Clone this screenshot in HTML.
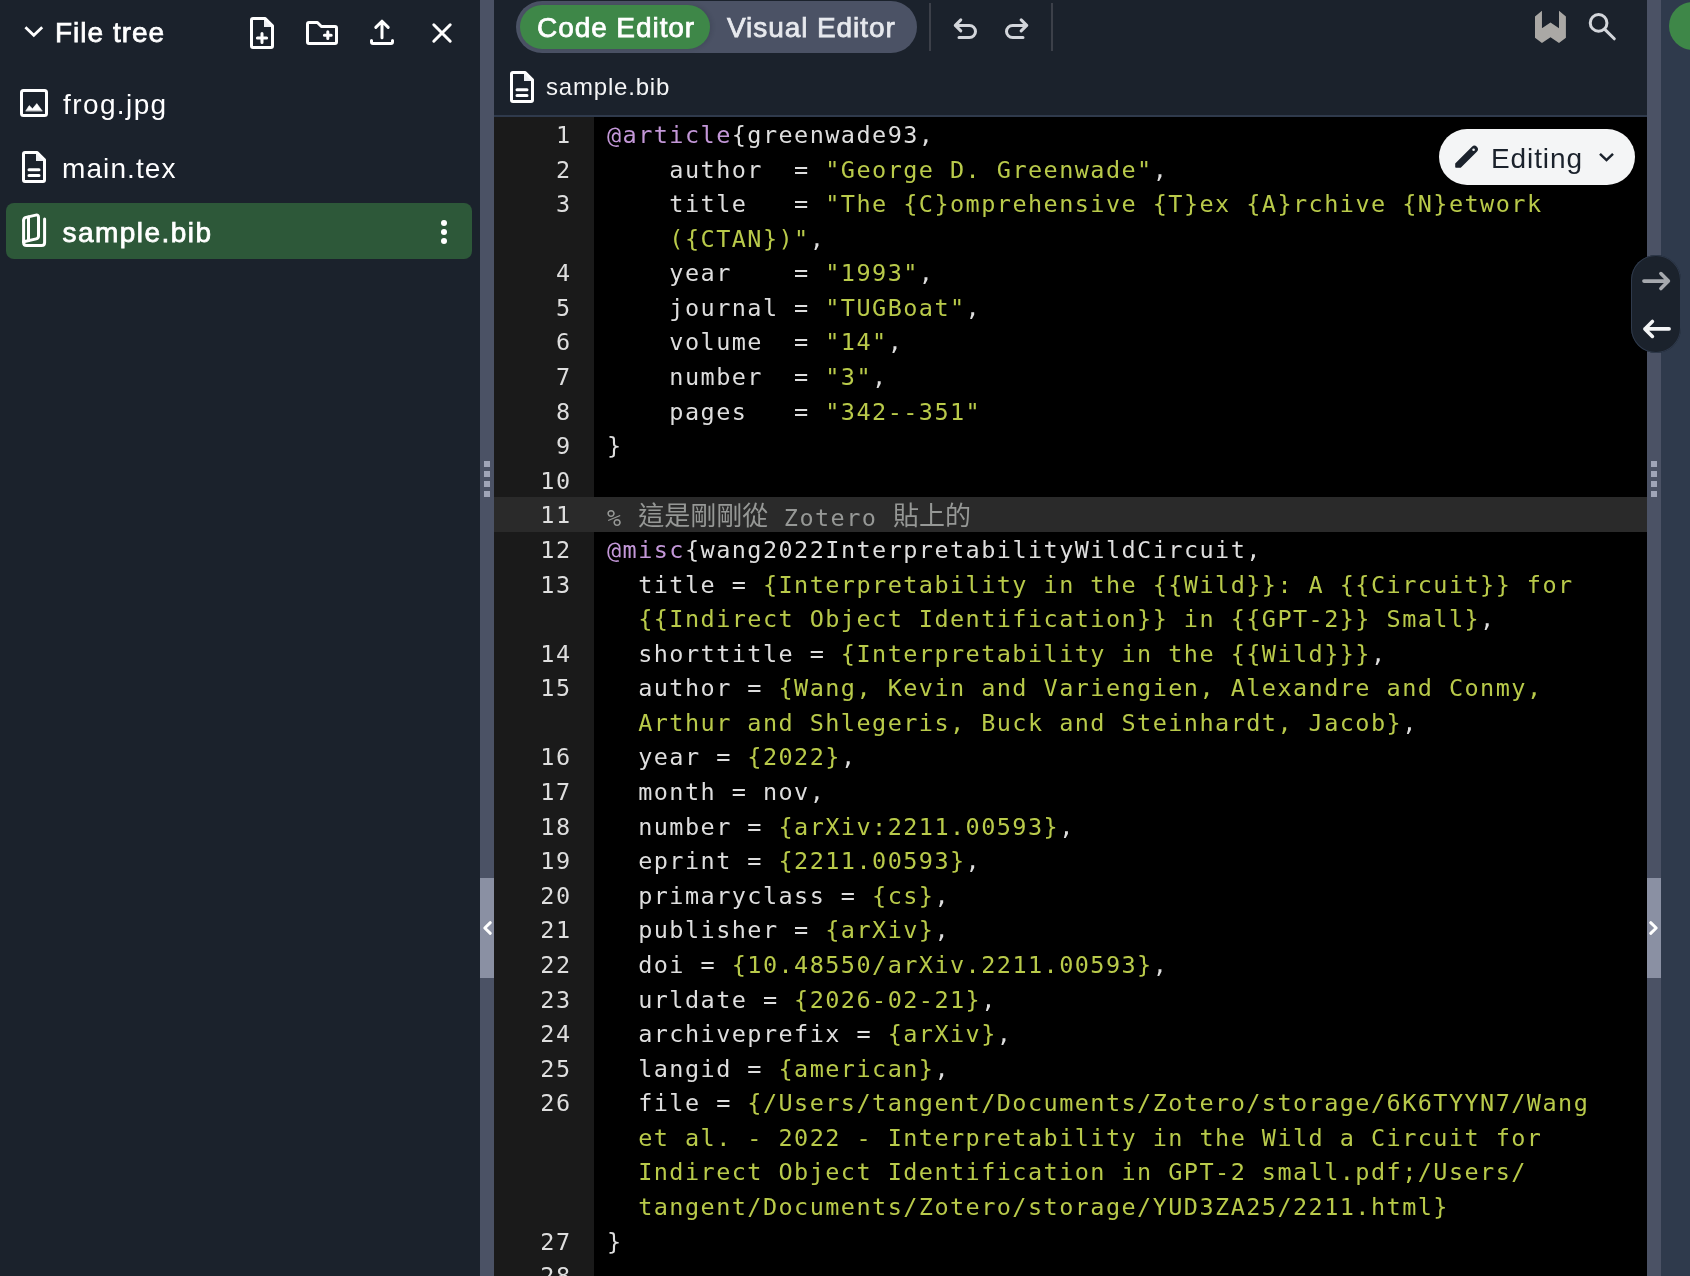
<!DOCTYPE html>
<html lang="en">
<head>
<meta charset="utf-8">
<title>sample.bib - Overleaf</title>
<style>
*{box-sizing:border-box;margin:0;padding:0}
html,body{width:1690px;height:1276px;overflow:hidden;background:#1b222c}
body{position:relative;font-family:"DejaVu Sans","Liberation Sans","Noto Sans CJK TC",sans-serif;color:#fff}
#app{position:absolute;left:0;top:0;width:1690px;height:1276px;overflow:hidden;background:#1b222c;will-change:transform}
.abs{position:absolute}
#sidebar{left:0;top:0;width:480px;height:1276px;background:#1b222c}
#divL{left:480px;top:0;width:14px;height:1276px;background:#4b5265}
#divR{left:1647px;top:0;width:14px;height:1276px;background:#4b5265}
#pdf{left:1661px;top:0;width:29px;height:1276px;background:#2f3a4c}
#toolbar{left:494px;top:0;width:1153px;height:115px;background:#1b222c}
#tbborder{left:494px;top:115px;width:1153px;height:2px;background:#2f3a4c}
#gutter{left:494px;top:117px;width:100px;height:1159px;background:#1a1a1a;overflow:hidden}
#code{left:594px;top:117px;width:1053px;height:1159px;background:#000;overflow:hidden}
.ln,.gn{position:absolute;left:0;right:0;height:34.58px;line-height:34.58px;padding-top:1px;white-space:pre;font-family:"DejaVu Sans Mono","Liberation Mono","Noto Sans CJK TC",monospace;font-size:23.5px;letter-spacing:1.443px;color:#dedede}
.cjk{font-family:"Noto Sans CJK TC","Noto Sans CJK SC",sans-serif;font-size:26px;letter-spacing:0;position:relative;top:-1.5px}
.ln{}
.ln.act{padding-left:13px;background:#2a2a2a}
.gn{text-align:right;padding-right:22.5px;color:#dedede}
.gn.act{background:#2a2a2a}
.k{color:#c397d8}.s{color:#b9ca4a}.c{color:#969896}.w{color:#dedede}
svg{display:block}
.ui{font-family:"DejaVu Sans","Liberation Sans",sans-serif}

.b28{font-family:"Liberation Sans",sans-serif;font-weight:normal;-webkit-text-stroke:.75px currentColor;font-size:28px;line-height:40px;white-space:nowrap;color:#fff;letter-spacing:.8px}
.r28{font-family:"Liberation Sans",sans-serif;font-size:28px;line-height:40px;white-space:nowrap;color:#fff;letter-spacing:.9px}
.r24{font-family:"Liberation Sans",sans-serif;font-size:24px;line-height:34px;white-space:nowrap;color:#f4f5f6;letter-spacing:.8px}
.ic{fill:none;stroke:#fff;stroke-width:1.5;stroke-linecap:round;stroke-linejoin:round}
.sq{left:4px;width:6px;height:6px;background:#a0a5b8}
.tog{left:0;width:14px;height:100px;background:#8a90a3}
#editing{left:1439px;top:129px;width:196px;height:56px;border-radius:28px;background:#f4f5f6}
#switch{left:1631px;top:255px;width:50px;height:98px;border-radius:25px;background:#1b222c;box-shadow:0 0 0 1px #2f3a4c inset}
</style>
</head>
<body>
<div id="app">
<div id="sidebar" class="abs">
  <svg class="abs" style="left:14px;top:11px" width="40" height="40" viewBox="0 0 40 40"><path d="M11.4 16.2 19.8 24.2 28.2 16.2" fill="none" stroke="#fff" stroke-width="2.8"/></svg>
  <div class="abs b28" id="ft" style="left:55px;top:13px;letter-spacing:1px">File tree</div>
  <!-- new file -->
  <svg class="abs ic" style="left:242px;top:13px" width="40" height="40" viewBox="0 0 20 20"><path d="M11 2.75V7h4.25V6.4L11.6 2.75Z" fill="#eef0f3" stroke="none"/><path d="M5.5 2.75H11.6L15.25 6.4V16.5a.75.75 0 0 1-.75.75h-9a.75.75 0 0 1-.75-.75v-13a.75.75 0 0 1 .75-.75Z"/><path d="M10 10.2v4.6M7.7 12.5h4.6"/></svg>
  <!-- new folder -->
  <svg class="abs ic" style="left:302px;top:13px" width="40" height="40" viewBox="0 0 20 20"><path d="M3.5 4.75H7.7L9.7 6.75H16.5a.75.75 0 0 1 .75.75v7a.75.75 0 0 1-.75.75h-13a.75.75 0 0 1-.75-.75v-9a.75.75 0 0 1 .75-.75Z"/><path d="M12.9 9.4v3.4M11.2 11.1h3.4"/></svg>
  <!-- upload -->
  <svg class="abs ic" style="left:362px;top:13px" width="40" height="40" viewBox="0 0 20 20"><path d="M10 12.4V4.3M6.9 7.2 10 4.1 13.1 7.2M4.75 13.8v.7a.75.75 0 0 0 .75.75h9a.75.75 0 0 0 .75-.75v-.7"/></svg>
  <!-- close -->
  <svg class="abs ic" style="left:422px;top:13px" width="40" height="40" viewBox="0 0 20 20"><path d="M5.9 5.9 14.1 14.1M14.1 5.9 5.9 14.1"/></svg>

  <div class="abs" id="sel" style="left:6px;top:203px;width:466px;height:56px;border-radius:8px;background:#2d5839"></div>
  <!-- image icon -->
  <svg class="abs ic" style="left:14px;top:83px" width="40" height="40" viewBox="0 0 20 20"><rect x="3.75" y="3.75" width="12.5" height="12.5" rx="1"/><path d="M5.95 13.9 7.6 11.3 9.25 12.9 11.4 10.3 14.05 13.9Z" fill="#fff" stroke-width=".3"/></svg>
  <div class="abs r28" style="left:63px;top:85px;letter-spacing:1.4px">frog.jpg</div>
  <!-- doc icon -->
  <svg class="abs ic" style="left:14px;top:147px" width="40" height="40" viewBox="0 0 20 20"><path d="M11 2.75V7h4.25V6.4L11.6 2.75Z" fill="#eef0f3" stroke="none"/><path d="M5.5 2.75H11.6L15.25 6.4V16.5a.75.75 0 0 1-.75.75h-9a.75.75 0 0 1-.75-.75v-13a.75.75 0 0 1 .75-.75Z"/><path d="M7.5 11.4h5M7.5 14.25h5"/></svg>
  <div class="abs r28" style="left:62px;top:149px;letter-spacing:1.1px">main.tex</div>
  <!-- book icon -->
  <svg class="abs" style="left:14px;top:211px" width="40" height="40" viewBox="0 0 40 40" fill="none" stroke="#fff" stroke-width="3" stroke-linecap="round" stroke-linejoin="round"><path d="M9.6 9.6Q9.6 7 12 6.4L21.8 4.1Q24.5 3.5 24.5 6.3V25Q24.5 27.3 22.2 27.85L9.6 30.7"/><path d="M9.6 9.6V31.6Q9.6 34.6 12.6 34.6H27.6Q30.6 34.6 30.6 31.6V8.1"/><path d="M14.5 6V29.4"/></svg>
  <div class="abs b28" style="left:62.5px;top:213px;letter-spacing:1.45px">sample.bib</div>
  <svg class="abs" style="left:424px;top:212px" width="40" height="40" viewBox="0 0 40 40" fill="#fff"><circle cx="20" cy="11" r="3"/><circle cx="20" cy="20" r="3"/><circle cx="20" cy="29" r="3"/></svg>
</div>
<div id="divL" class="abs">
  <div class="abs sq" style="top:461px"></div><div class="abs sq" style="top:471px"></div><div class="abs sq" style="top:481px"></div><div class="abs sq" style="top:491px"></div>
  <div class="abs tog" style="top:878px"><svg width="14" height="100" viewBox="0 0 14 100"><path d="M10.3 44.7 4.8 50 10.3 55.3" fill="none" stroke="#fff" stroke-width="3" stroke-linecap="round" stroke-linejoin="round"/></svg></div>
</div>
<div id="toolbar" class="abs">
  <div class="abs" id="pill" style="left:22px;top:1px;width:401px;height:52px;border-radius:26px;background:#4b5265"></div>
  <div class="abs" id="pillon" style="left:26px;top:5px;width:190px;height:44px;border-radius:22px;background:#3e8748;box-shadow:2px 0 4px rgba(27,34,44,.16)"></div>
  <div class="abs b28" style="left:43px;top:8px;letter-spacing:.93px">Code Editor</div>
  <div class="abs b28" style="left:233px;top:8px;color:#e7e9ee;letter-spacing:.92px">Visual Editor</div>
  <div class="abs" style="left:435px;top:3px;width:2px;height:48px;background:#3c4049"></div>
  <div class="abs" style="left:557px;top:3px;width:2px;height:48px;background:#3c4049"></div>
  <!-- undo -->
  <svg class="abs" style="left:451px;top:7px" width="40" height="40" viewBox="0 0 40 40" fill="none" stroke="#d3d6db" stroke-width="3" stroke-linecap="round" stroke-linejoin="round"><path d="M10.3 18.4H24.4A6.1 6.1 0 0 1 24.4 30.6H14M15.8 12.9 10.3 18.4 15.8 23.9"/></svg>
  <!-- redo -->
  <svg class="abs" style="left:503px;top:7px" width="40" height="40" viewBox="0 0 40 40" fill="none" stroke="#d3d6db" stroke-width="3" stroke-linecap="round" stroke-linejoin="round"><path d="M29.7 18.4H15.6A6.1 6.1 0 0 0 15.6 30.6H26M24.2 12.9 29.7 18.4 24.2 23.9"/></svg>
  <!-- writefull -->
  <svg class="abs" style="left:1036px;top:6px" width="40" height="40" viewBox="0 0 40 40"><path d="M11.95 4.65V22.2L20.5 16.4 29 22.2V4.65L35.9 10.5V31.8L29 37.1 20.5 31.3 11.95 37.1 5 31.8V10.5Z" fill="#aaa8a5"/></svg>
  <!-- search -->
  <svg class="abs" style="left:1084px;top:7px" width="40" height="40" viewBox="0 0 40 40" fill="none" stroke="#d3d6db" stroke-width="3" stroke-linecap="round"><circle cx="20.6" cy="15.9" r="8.35"/><path d="M26.8 22.4 36.3 31.8"/></svg>
  <!-- breadcrumb -->
  <svg class="abs ic" style="left:8px;top:67px" width="40" height="40" viewBox="0 0 20 20"><path d="M11 2.75V7h4.25V6.4L11.6 2.75Z" fill="#eef0f3" stroke="none"/><path d="M5.5 2.75H11.6L15.25 6.4V16.5a.75.75 0 0 1-.75.75h-9a.75.75 0 0 1-.75-.75v-13a.75.75 0 0 1 .75-.75Z"/><path d="M7.5 11.4h5M7.5 14.25h5"/></svg>
  <div class="abs r24" style="left:52px;top:70px">sample.bib</div>
</div>
<div id="tbborder" class="abs"></div>
<div id="gutter" class="abs">
<div class="gn" style="top:0.00px">1</div>
<div class="gn" style="top:34.58px">2</div>
<div class="gn" style="top:69.16px">3</div>
<div class="gn" style="top:138.32px">4</div>
<div class="gn" style="top:172.90px">5</div>
<div class="gn" style="top:207.48px">6</div>
<div class="gn" style="top:242.06px">7</div>
<div class="gn" style="top:276.64px">8</div>
<div class="gn" style="top:311.22px">9</div>
<div class="gn" style="top:345.80px">10</div>
<div class="gn act" style="top:380.38px">11</div>
<div class="gn" style="top:414.96px">12</div>
<div class="gn" style="top:449.54px">13</div>
<div class="gn" style="top:518.70px">14</div>
<div class="gn" style="top:553.28px">15</div>
<div class="gn" style="top:622.44px">16</div>
<div class="gn" style="top:657.02px">17</div>
<div class="gn" style="top:691.60px">18</div>
<div class="gn" style="top:726.18px">19</div>
<div class="gn" style="top:760.76px">20</div>
<div class="gn" style="top:795.34px">21</div>
<div class="gn" style="top:829.92px">22</div>
<div class="gn" style="top:864.50px">23</div>
<div class="gn" style="top:899.08px">24</div>
<div class="gn" style="top:933.66px">25</div>
<div class="gn" style="top:968.24px">26</div>
<div class="gn" style="top:1106.56px">27</div>
<div class="gn" style="top:1141.14px">28</div>
</div>
<div id="code" class="abs">
<div class="ln" style="top:0.00px;left:13.00px"><span class="k">@article</span><span class="w">{greenwade93,</span></div>
<div class="ln" style="top:34.58px;left:75.36px"><span class="w">author  = </span><span class="s">"George D. Greenwade"</span><span class="w">,</span></div>
<div class="ln" style="top:69.16px;left:75.36px"><span class="w">title   = </span><span class="s">"The {C}omprehensive {T}ex {A}rchive {N}etwork</span></div>
<div class="ln" style="top:103.74px;left:75.36px"><span class="s">({CTAN})"</span><span class="w">,</span></div>
<div class="ln" style="top:138.32px;left:75.36px"><span class="w">year    = </span><span class="s">"1993"</span><span class="w">,</span></div>
<div class="ln" style="top:172.90px;left:75.36px"><span class="w">journal = </span><span class="s">"TUGBoat"</span><span class="w">,</span></div>
<div class="ln" style="top:207.48px;left:75.36px"><span class="w">volume  = </span><span class="s">"14"</span><span class="w">,</span></div>
<div class="ln" style="top:242.06px;left:75.36px"><span class="w">number  = </span><span class="s">"3"</span><span class="w">,</span></div>
<div class="ln" style="top:276.64px;left:75.36px"><span class="w">pages   = </span><span class="s">"342--351"</span></div>
<div class="ln" style="top:311.22px;left:13.00px"><span class="w">}</span></div>
<div class="ln" style="top:345.80px;left:13.00px"></div>
<div class="ln act" style="top:380.38px;left:0.00px"><span class="c">% <span class="cjk">這是剛剛從</span> Zotero <span class="cjk">貼上的</span></span></div>
<div class="ln" style="top:414.96px;left:13.00px"><span class="k">@misc</span><span class="w">{wang2022InterpretabilityWildCircuit,</span></div>
<div class="ln" style="top:449.54px;left:44.18px"><span class="w">title = </span><span class="s">{Interpretability in the {{Wild}}: A {{Circuit}} for</span></div>
<div class="ln" style="top:484.12px;left:44.18px"><span class="s">{{Indirect Object Identification}} in {{GPT-2}} Small}</span><span class="w">,</span></div>
<div class="ln" style="top:518.70px;left:44.18px"><span class="w">shorttitle = </span><span class="s">{Interpretability in the {{Wild}}}</span><span class="w">,</span></div>
<div class="ln" style="top:553.28px;left:44.18px"><span class="w">author = </span><span class="s">{Wang, Kevin and Variengien, Alexandre and Conmy,</span></div>
<div class="ln" style="top:587.86px;left:44.18px"><span class="s">Arthur and Shlegeris, Buck and Steinhardt, Jacob}</span><span class="w">,</span></div>
<div class="ln" style="top:622.44px;left:44.18px"><span class="w">year = </span><span class="s">{2022}</span><span class="w">,</span></div>
<div class="ln" style="top:657.02px;left:44.18px"><span class="w">month = nov,</span></div>
<div class="ln" style="top:691.60px;left:44.18px"><span class="w">number = </span><span class="s">{arXiv:2211.00593}</span><span class="w">,</span></div>
<div class="ln" style="top:726.18px;left:44.18px"><span class="w">eprint = </span><span class="s">{2211.00593}</span><span class="w">,</span></div>
<div class="ln" style="top:760.76px;left:44.18px"><span class="w">primaryclass = </span><span class="s">{cs}</span><span class="w">,</span></div>
<div class="ln" style="top:795.34px;left:44.18px"><span class="w">publisher = </span><span class="s">{arXiv}</span><span class="w">,</span></div>
<div class="ln" style="top:829.92px;left:44.18px"><span class="w">doi = </span><span class="s">{10.48550/arXiv.2211.00593}</span><span class="w">,</span></div>
<div class="ln" style="top:864.50px;left:44.18px"><span class="w">urldate = </span><span class="s">{2026-02-21}</span><span class="w">,</span></div>
<div class="ln" style="top:899.08px;left:44.18px"><span class="w">archiveprefix = </span><span class="s">{arXiv}</span><span class="w">,</span></div>
<div class="ln" style="top:933.66px;left:44.18px"><span class="w">langid = </span><span class="s">{american}</span><span class="w">,</span></div>
<div class="ln" style="top:968.24px;left:44.18px"><span class="w">file = </span><span class="s">{/Users/tangent/Documents/Zotero/storage/6K6TYYN7/Wang</span></div>
<div class="ln" style="top:1002.82px;left:44.18px"><span class="s">et al. - 2022 - Interpretability in the Wild a Circuit for</span></div>
<div class="ln" style="top:1037.40px;left:44.18px"><span class="s">Indirect Object Identification in GPT-2 small.pdf;/Users/</span></div>
<div class="ln" style="top:1071.98px;left:44.18px"><span class="s">tangent/Documents/Zotero/storage/YUD3ZA25/2211.html}</span></div>
<div class="ln" style="top:1106.56px;left:13.00px"><span class="w">}</span></div>
<div class="ln" style="top:1141.14px;left:13.00px"></div>
</div>
<div id="divR" class="abs">
  <div class="abs sq" style="top:461px"></div><div class="abs sq" style="top:471px"></div><div class="abs sq" style="top:481px"></div><div class="abs sq" style="top:491px"></div>
  <div class="abs tog" style="top:878px"><svg width="14" height="100" viewBox="0 0 14 100"><path d="M3.7 44.7 9.2 50 3.7 55.3" fill="none" stroke="#fff" stroke-width="3" stroke-linecap="round" stroke-linejoin="round"/></svg></div>
</div>
<div id="pdf" class="abs">
  <div class="abs" style="left:8px;top:2px;width:120px;height:48px;border-radius:24px;background:#3e8748"></div>
</div>
<div id="editing" class="abs">
  <svg class="abs" style="left:12px;top:12px" width="32" height="32" viewBox="0 0 32 32"><path d="M4.2 22.52 20.96 5.76A3.45 3.45 0 0 1 25.84 10.64L9.73 26.75H5Q4.2 26.75 4.2 25.95Z" fill="#1b222c"/><circle cx="22.6" cy="8.8" r="1.3" fill="#f4f5f6"/></svg>
  <div class="abs r28" style="left:52px;top:10px;color:#1b222c">Editing</div>
  <svg class="abs" style="left:148px;top:8px" width="40" height="40" viewBox="0 0 40 40"><path d="M13 16.8 19.5 23.1 26 16.8" fill="none" stroke="#1b222c" stroke-width="2.5"/></svg>
</div>
<div id="switch" class="abs">
  <svg width="50" height="98" viewBox="0 0 50 98" fill="none" stroke-width="3.6" stroke-linecap="round" stroke-linejoin="round"><path d="M12.9 26.1H37.4M29.9 18.6 37.4 26.1 29.9 33.6" stroke="#a6a9ae"/><path d="M38.1 73.9H13.9M21.4 66.4 13.9 73.9 21.4 81.4" stroke="#f4f5f6"/></svg>
</div>
</div>
</body>
</html>
